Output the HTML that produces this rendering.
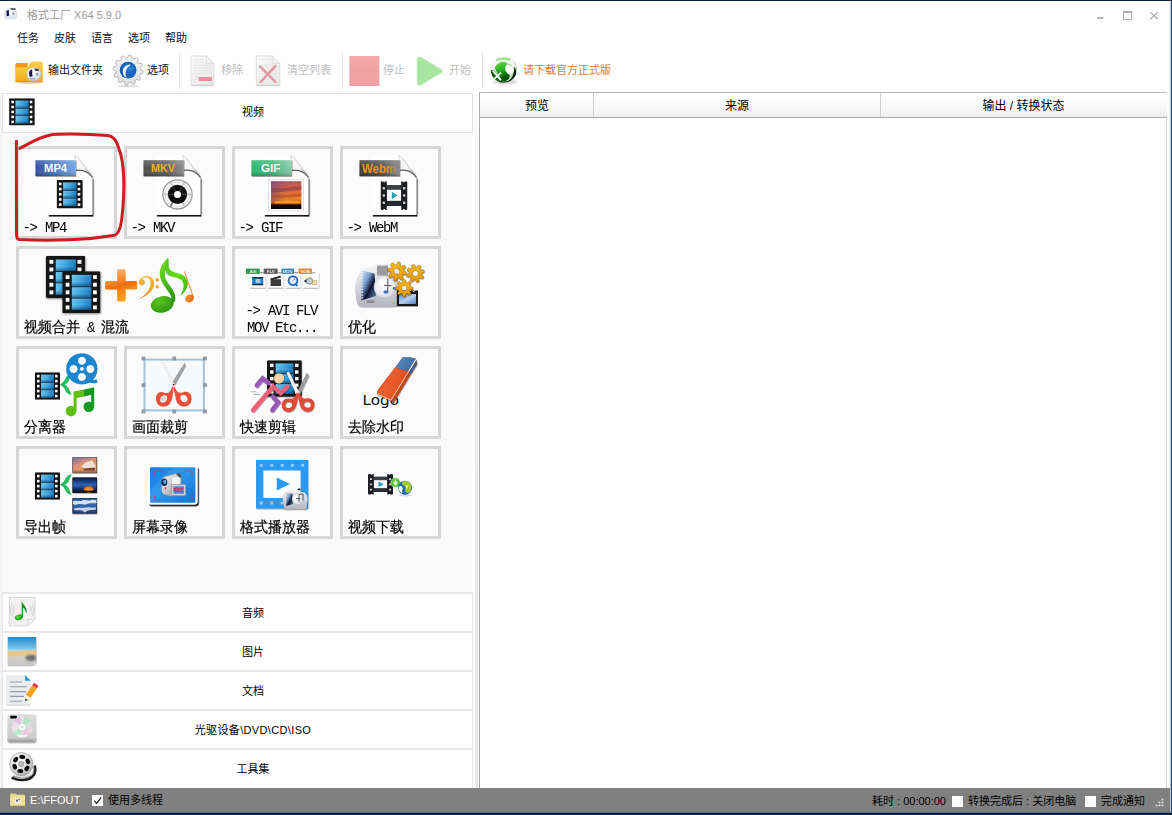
<!DOCTYPE html>
<html lang="zh-CN">
<head>
<meta charset="utf-8">
<title>格式工厂 X64 5.9.0</title>
<style>
html,body{margin:0;padding:0;}
body{width:1172px;height:815px;overflow:hidden;position:relative;background:#fff;
  font-family:"Liberation Sans","Noto Sans CJK SC",sans-serif;font-size:11px;color:#000;}
.abs,#win *{position:absolute;}
#win{position:absolute;left:0;top:0;width:1172px;height:815px;overflow:hidden;background:#fefefe;}
#win svg{overflow:visible;}
#win span.t{white-space:nowrap;line-height:16px;height:16px;}
/* borders */
#btop{left:0;top:0;width:1172px;height:1px;background:#0d2342;}
#bright{left:1170px;top:0;width:2px;height:815px;background:linear-gradient(90deg,#b4c8e0 0,#b4c8e0 40%,#1b467c 60%,#1b467c 100%);}
#bbot{left:0;top:812px;width:1172px;height:3px;background:linear-gradient(180deg,#566e8c 0,#566e8c 30%,#0c2244 40%,#0a1c3a 100%);}
/* title */
#title{left:27px;top:7px;color:#9b9b9b;font-size:11px;}
/* menu */
.menu{top:30px;font-size:11px;color:#111;}
/* toolbar */
.tb{top:61.5px;font-size:11px;color:#111;}
.tb.dis{color:#bdbdbd;}
.sep{top:52px;width:1px;height:37px;background:#e6e6e6;}
/* left panel */
#lp{left:0;top:92px;width:479px;height:696px;background:#fff;border-left:2px solid #f3f3f3;box-sizing:border-box;}
#strip{left:475px;top:93px;width:3px;height:695px;background:linear-gradient(180deg,#fafafa 0,#f2f2f2 25%,#e9e9e9 55%,#e8e8e8 100%);}
#lpbg{left:2px;top:93px;width:470px;height:695px;background:#fafafa;}
#vh{left:2px;top:93px;width:469px;height:38px;background:#fff;border:1px solid #e2e2e2;box-sizing:content-box;}
.tile{width:95px;height:87px;border:3px solid #d6d6d6;background:#fbfbfb;box-sizing:content-box;}
.tile.w{width:203px;}
.lbl{font-family:"Liberation Mono","WenQuanYi Zen Hei",monospace;font-size:14px;line-height:16px;white-space:nowrap;color:#000;-webkit-text-stroke:.2px #000;transform:scaleY(1.07);transform-origin:0 90%;}
.lat{letter-spacing:-1.4px;position:static !important;-webkit-text-stroke:0;}
.ar{position:static !important;margin-left:-1.5px;margin-right:1.5px;}
.acc{left:2px;width:469px;height:37px;background:#fff;border:1px solid #e6e6e6;border-top:2px solid #e8e8e8;border-bottom:none;}
.acct{width:200px;left:153px;text-align:center;font-size:11px;line-height:16px;color:#000;}
/* list */
#list{left:479px;top:92px;width:688px;height:696px;background:#fff;border-left:1px solid #a9a9a9;border-top:1px solid #b4b4b4;border-right:1px solid #dadada;box-sizing:border-box;}
#lh{left:480px;top:93px;width:687px;height:24px;background:linear-gradient(180deg,#ffffff 0,#fbfbfb 50%,#efefef 100%);border-bottom:1px solid #aaaaaa;}
.lht{top:98px;font-size:12px;line-height:16px;color:#000;text-align:center;}
.csep{top:93px;width:1px;height:24px;background:#d0d0d0;}
/* status */
#sb{left:0;top:788px;width:1172px;height:25px;background:#808080;}
.st{top:792px;font-size:11px;line-height:16px;white-space:nowrap;}
.cb{width:11px;height:11px;background:#fff;top:795px;}
</style>
</head>
<body>
<div id="win">
<!--TITLE-->
<span class="t" id="title">格式工厂 X64 5.9.0</span>
<!--WINCTL-->
<!--MENU-->
<span class="t menu" style="left:17px">任务</span>
<span class="t menu" style="left:54px">皮肤</span>
<span class="t menu" style="left:91px">语言</span>
<span class="t menu" style="left:128px">选项</span>
<span class="t menu" style="left:165px">帮助</span>
<!--TOOLBAR-->
<span class="t tb" style="left:48px">输出文件夹</span>
<span class="t tb" style="left:147px">选项</span>
<div class="sep" style="left:179px"></div>
<span class="t tb dis" style="left:221px">移除</span>
<span class="t tb dis" style="left:287px">清空列表</span>
<div class="sep" style="left:342px"></div>
<span class="t tb dis" style="left:383px">停止</span>
<span class="t tb dis" style="left:449px">开始</span>
<div class="sep" style="left:482px"></div>
<span class="t tb" style="left:523px;color:#e87a1e">请下载官方正式版</span>
<!--LEFT-->
<div id="lp"></div>
<div id="lpbg"></div><div id="strip"></div>
<div id="vh"></div>
<span class="t acct" style="top:104px">视频</span>
<!--TILES-->
<div class="tile" style="left:16px;top:146px"></div>
<div class="tile" style="left:124px;top:146px"></div>
<div class="tile" style="left:232px;top:146px"></div>
<div class="tile" style="left:340px;top:146px"></div>
<div class="tile w" style="left:16px;top:246px"></div>
<div class="tile" style="left:232px;top:246px"></div>
<div class="tile" style="left:340px;top:246px"></div>
<div class="tile" style="left:16px;top:346px"></div>
<div class="tile" style="left:124px;top:346px"></div>
<div class="tile" style="left:232px;top:346px"></div>
<div class="tile" style="left:340px;top:346px"></div>
<div class="tile" style="left:16px;top:446px"></div>
<div class="tile" style="left:124px;top:446px"></div>
<div class="tile" style="left:232px;top:446px"></div>
<div class="tile" style="left:340px;top:446px"></div>
<!--LABELS-->
<span class="lbl" style="left:24px;top:220px"><span class="lat"><span class="ar">-&gt;</span> MP4</span></span>
<span class="lbl" style="left:132px;top:220px"><span class="lat"><span class="ar">-&gt;</span> MKV</span></span>
<span class="lbl" style="left:240px;top:220px"><span class="lat"><span class="ar">-&gt;</span> GIF</span></span>
<span class="lbl" style="left:348px;top:220px"><span class="lat"><span class="ar">-&gt;</span> WebM</span></span>
<span class="lbl" style="left:24px;top:320px">视频合并<span class="lat"> &amp; </span>混流</span>
<span class="lbl" style="left:247px;top:303px"><span class="lat"><span class="ar">-&gt;</span> AVI FLV</span></span>
<span class="lbl" style="left:247px;top:320px"><span class="lat">MOV Etc...</span></span>
<span class="lbl" style="left:348px;top:320px">优化</span>
<span class="lbl" style="left:24px;top:420px">分离器</span>
<span class="lbl" style="left:132px;top:420px">画面裁剪</span>
<span class="lbl" style="left:240px;top:420px">快速剪辑</span>
<span class="lbl" style="left:348px;top:420px">去除水印</span>
<span class="lbl" style="left:24px;top:520px">导出帧</span>
<span class="lbl" style="left:132px;top:520px">屏幕录像</span>
<span class="lbl" style="left:240px;top:520px">格式播放器</span>
<span class="lbl" style="left:348px;top:520px">视频下载</span>
<!--ACCORDION-->
<div class="acc" style="top:592px"></div>
<div class="acc" style="top:631px"></div>
<div class="acc" style="top:670px"></div>
<div class="acc" style="top:709px"></div>
<div class="acc" style="top:748px;height:40px"></div>
<span class="t acct" style="top:605px">音频</span>
<span class="t acct" style="top:644px">图片</span>
<span class="t acct" style="top:683px">文档</span>
<span class="t acct" style="top:722px;letter-spacing:.35px">光驱设备\DVD\CD\ISO</span>
<span class="t acct" style="top:761px">工具集</span>
<!--LIST-->
<div id="list"></div>
<div id="lh"></div>
<div class="csep" style="left:593px"></div>
<div class="csep" style="left:880px"></div>
<span class="t lht" style="left:480px;width:114px">预览</span>
<span class="t lht" style="left:594px;width:286px">来源</span>
<span class="t lht" style="left:881px;width:285px">输出 / 转换状态</span>
<!--STATUS-->
<div id="sb"></div>
<span class="t st" style="left:30px;color:#fff">E:\FFOUT</span>
<div class="cb" style="left:92px"></div>
<span class="t st" style="left:108px">使用多线程</span>
<span class="t st" style="top:793px;left:872px">耗时 : 00:00:00</span>
<div class="cb" style="left:952px;top:796px"></div>
<span class="t st" style="top:793px;left:968px">转换完成后 : 关闭电脑</span>
<div class="cb" style="left:1085px;top:796px"></div>
<span class="t st" style="top:793px;left:1101px">完成通知</span>
<svg id="ic" width="1172" height="815" viewBox="0 0 1172 815" style="left:0;top:0">
<defs>
<linearGradient id="gfilm" x1="0" y1="0" x2="1" y2="0"><stop offset="0" stop-color="#6ac6ee"/><stop offset=".5" stop-color="#3fa6de"/><stop offset="1" stop-color="#1c7cc0"/></linearGradient>
<linearGradient id="gfilmv" x1="0" y1="0" x2="0" y2="1"><stop offset="0" stop-color="#fff" stop-opacity=".12"/><stop offset=".6" stop-color="#003060" stop-opacity="0"/><stop offset="1" stop-color="#002850" stop-opacity=".55"/></linearGradient>
<symbol id="film" viewBox="0 0 25 27" preserveAspectRatio="none">
<rect x="0" y="0" width="25" height="27" rx=".9" fill="#151515"/>
<g fill="#fff"><rect x="2.2" y="2.5" width="2.5" height="2.5"/><rect x="2.2" y="7.4" width="2.5" height="2.5"/><rect x="2.2" y="12.3" width="2.5" height="2.5"/><rect x="2.2" y="17.2" width="2.5" height="2.5"/><rect x="2.2" y="22.1" width="2.5" height="2.5"/>
<rect x="20.1" y="2.5" width="2.5" height="2.5"/><rect x="20.1" y="7.4" width="2.5" height="2.5"/><rect x="20.1" y="12.3" width="2.5" height="2.5"/><rect x="20.1" y="17.2" width="2.5" height="2.5"/><rect x="20.1" y="22.1" width="2.5" height="2.5"/></g>
<g fill="url(#gfilm)"><rect x="6.2" y="2.3" width="12.8" height="7.4"/><rect x="6.2" y="10.3" width="12.8" height="6.7"/><rect x="6.2" y="17.6" width="12.8" height="7.2"/></g>
<g fill="url(#gfilmv)"><rect x="6.2" y="2.3" width="12.8" height="7.4"/><rect x="6.2" y="10.3" width="12.8" height="6.7"/><rect x="6.2" y="17.6" width="12.8" height="7.2"/></g>
</symbol>
<filter id="psh" x="-10%" y="-10%" width="125%" height="125%"><feDropShadow dx="1.2" dy="1.7" stdDeviation=".65" flood-color="#000" flood-opacity="1"/></filter>
<filter id="ssh" x="-20%" y="-20%" width="150%" height="150%"><feDropShadow dx=".4" dy=".8" stdDeviation=".6" flood-color="#000" flood-opacity=".45"/></filter>
<filter id="b1"><feGaussianBlur stdDeviation=".5"/></filter>
<filter id="b2"><feGaussianBlur stdDeviation="1"/></filter>
<linearGradient id="gflap" x1="0" y1="0" x2="1" y2="1"><stop offset="0" stop-color="#fff"/><stop offset=".55" stop-color="#f4f4f4"/><stop offset="1" stop-color="#9a9a9a"/></linearGradient>
<symbol id="page" viewBox="0 0 48 62" overflow="visible">
<path d="M.2,.2H27C30,1 33,6 36,10C39,14 43.5,17 44.8,22.5V59.2H.2Z" fill="#fff" filter="url(#psh)"/>
<path d="M.2,.2H27C30,1 33,6 36,10C39,14 43.5,17 44.8,22.5V59.2H.2Z" fill="#fff"/>
<path d="M27,.2C28.6,5 29.2,10 28.4,14.6C34,14 40.5,15.5 44.6,21.5C42.5,16 38.5,13.5 36,10C33,6 30,1 27,.2Z" fill="url(#gflap)" stroke="#9a9a9a" stroke-width=".4"/>
<path d="M28.4,14.8C34,14.2 40.5,15.6 44.7,21.8" fill="none" stroke="#4a4a4a" stroke-width="1.2" opacity=".8"/>
</symbol>
<linearGradient id="gmp4" x1="0" y1="0" x2="1" y2="0"><stop offset="0" stop-color="#34519f"/><stop offset=".45" stop-color="#4b78c4"/><stop offset="1" stop-color="#72a9e6"/></linearGradient>
<linearGradient id="gmkv" x1="0" y1="0" x2="1" y2="0"><stop offset="0" stop-color="#4e4e4e"/><stop offset=".6" stop-color="#626262"/><stop offset="1" stop-color="#8e8e8e"/></linearGradient>
<linearGradient id="ggif" x1="0" y1="0" x2="1" y2="0"><stop offset="0" stop-color="#2cb86c"/><stop offset=".5" stop-color="#3dbb7a"/><stop offset="1" stop-color="#8ccab0"/></linearGradient>
<linearGradient id="gwebm" x1="0" y1="0" x2="1" y2="0"><stop offset="0" stop-color="#3c3c3c"/><stop offset=".6" stop-color="#5a5a5a"/><stop offset="1" stop-color="#8e8e8e"/></linearGradient>
<linearGradient id="glabsh" x1="0" y1="0" x2="0" y2="1"><stop offset="0" stop-color="#fff" stop-opacity=".18"/><stop offset=".5" stop-color="#fff" stop-opacity="0"/><stop offset="1" stop-color="#000" stop-opacity=".22"/></linearGradient>
<linearGradient id="gsun" x1="0" y1="0" x2="0" y2="1"><stop offset="0" stop-color="#b05a62"/><stop offset=".3" stop-color="#e0603c"/><stop offset=".62" stop-color="#f58a1e"/><stop offset=".78" stop-color="#d05a10"/><stop offset=".86" stop-color="#1a0c08"/><stop offset="1" stop-color="#0a0606"/></linearGradient>
<linearGradient id="gsunh" x1="0" y1="0" x2="1" y2="0"><stop offset="0" stop-color="#5a4a90" stop-opacity=".55"/><stop offset=".5" stop-color="#7a4a80" stop-opacity=".1"/><stop offset="1" stop-color="#ff5030" stop-opacity=".15"/></linearGradient>
<symbol id="wfilm" viewBox="0 0 27 29">
<path d="M0,1.2 L.8,0 H2.6 L3.2,1 H4.2 L4.8,0 H6.2V4H20.8V0H22.2L22.8,1H23.8L24.4,0H26.2L27,1.2V27.8L26.2,29H24.4L23.8,28H22.8L22.2,29H20.8V25H6.2V29H4.8L4.2,28H3.2L2.6,29H.8L0,27.8Z" fill="#1b1d20"/>
<rect x="6.2" y="4" width="14.6" height="4.4" fill="#3c4146"/>
<rect x="6.2" y="20.4" width="14.6" height="4.6" fill="#2a2d31"/>
<rect x="6.4" y="8.6" width="14.2" height="11.2" fill="#fafafa"/>
<path d="M11.3,10.6V18.2L17,14.4Z" fill="#1ea7b6"/>
<g fill="#c9c9c9"><rect x="2" y="5.8" width="2.5" height="2.6" rx=".5"/><rect x="2" y="13.1" width="2.5" height="2.6" rx=".5"/><rect x="2" y="20.4" width="2.5" height="2.6" rx=".5"/><rect x="22.5" y="5.8" width="2.5" height="2.6" rx=".5"/><rect x="22.5" y="13.1" width="2.5" height="2.6" rx=".5"/><rect x="22.5" y="20.4" width="2.5" height="2.6" rx=".5"/></g>
</symbol>
<linearGradient id="gwebmfade" x1="0" y1="0" x2="1" y2="0"><stop offset="0" stop-color="#777" stop-opacity="0"/><stop offset="1" stop-color="#8a8a8a" stop-opacity=".75"/></linearGradient>
<linearGradient id="gplus" x1="0" y1="0" x2=".35" y2="1"><stop offset="0" stop-color="#fbc090"/><stop offset=".45" stop-color="#f58a2c"/><stop offset=".6" stop-color="#f07414"/><stop offset="1" stop-color="#f9a21e"/></linearGradient>
<linearGradient id="gclef" x1="0" y1="0" x2="0" y2="1"><stop offset="0" stop-color="#f6b840"/><stop offset=".6" stop-color="#f2a024"/><stop offset="1" stop-color="#ee7a1a"/></linearGradient>
<linearGradient id="ggreen" x1="0" y1="0" x2=".4" y2="1"><stop offset="0" stop-color="#7ee02c"/><stop offset=".5" stop-color="#52c418"/><stop offset="1" stop-color="#2f9a12"/></linearGradient>
<radialGradient id="ggreenh" cx=".4" cy=".3" r=".8"><stop offset="0" stop-color="#5cc420"/><stop offset="1" stop-color="#2a9010"/></radialGradient>
<linearGradient id="gflagg" x1="0" y1="0" x2="1" y2="1"><stop offset="0" stop-color="#4cc018"/><stop offset=".5" stop-color="#66de14"/><stop offset="1" stop-color="#3fae14"/></linearGradient>
<radialGradient id="gonote" cx=".4" cy=".35" r=".8"><stop offset="0" stop-color="#f8902c"/><stop offset="1" stop-color="#ea6410"/></radialGradient>
<filter id="fsh" x="-15%" y="-15%" width="140%" height="140%"><feDropShadow dx=".3" dy=".8" stdDeviation=".9" flood-color="#000" flood-opacity=".55"/></filter>
<linearGradient id="gsilver" x1="0" y1="0" x2="0" y2="1"><stop offset="0" stop-color="#f4f4f6"/><stop offset=".5" stop-color="#d6d8dc"/><stop offset="1" stop-color="#b4b6bc"/></linearGradient>
<radialGradient id="gdisc" cx=".4" cy=".35" r=".75"><stop offset="0" stop-color="#ffffff"/><stop offset=".7" stop-color="#e6e6ea"/><stop offset="1" stop-color="#c4c4cc"/></radialGradient>
<linearGradient id="gbluefilm" x1="0" y1="0" x2="1" y2="1"><stop offset="0" stop-color="#dce8f6"/><stop offset=".35" stop-color="#7aa0d0"/><stop offset=".6" stop-color="#0c1430"/><stop offset="1" stop-color="#5a88c8"/></linearGradient>
<linearGradient id="ggear" x1="0" y1="0" x2="0" y2="1"><stop offset="0" stop-color="#f8b818"/><stop offset="1" stop-color="#e89808"/></linearGradient>
<linearGradient id="gscreen" x1="0" y1="0" x2="1" y2="1"><stop offset="0" stop-color="#5a90d8"/><stop offset=".5" stop-color="#b8d0f0"/><stop offset="1" stop-color="#4a80c8"/></linearGradient>
<linearGradient id="gbrace" x1="0" y1="0" x2="1" y2="0"><stop offset="0" stop-color="#12a050"/><stop offset=".5" stop-color="#2cc468"/><stop offset="1" stop-color="#18a858"/></linearGradient>
<symbol id="brace" viewBox="0 0 13 22" overflow="visible">
<path d="M0,10.4C3.2,9 4.6,6.4 5.8,3.8C7,1.400 9.2,.1 12.4,0C11,1.500 10.400,3.200 9.800,5.200C8.800,8.200 7,10 5,10.500C7,11.100 8.600,12.900 9.600,15.700C10.300,17.800 11,19.600 12.400,21.200C9,20.900 7,19.600 5.800,17.200C4.500,14.400 3.200,11.700 0,10.400Z" fill="url(#gbrace)"/>
</symbol>
<linearGradient id="gthumb1" x1="0" y1="0" x2=".6" y2="1"><stop offset="0" stop-color="#7c6c9c"/><stop offset=".45" stop-color="#d89078"/><stop offset="1" stop-color="#f6a050"/></linearGradient>
<linearGradient id="gthumb2" x1="0" y1="0" x2="0" y2="1"><stop offset="0" stop-color="#0c1a50"/><stop offset=".5" stop-color="#2c64b8"/><stop offset=".7" stop-color="#143878"/><stop offset="1" stop-color="#060c20"/></linearGradient>
<linearGradient id="gthumb3" x1="0" y1="0" x2="0" y2="1"><stop offset="0" stop-color="#2a5aa8"/><stop offset=".5" stop-color="#3466b0"/><stop offset="1" stop-color="#1c3c70"/></linearGradient>
<radialGradient id="gdome" cx=".5" cy=".6" r=".6"><stop offset="0" stop-color="#ffb030"/><stop offset="1" stop-color="#d05808"/></radialGradient>
<linearGradient id="gscr" x1="0" y1="0" x2="1" y2="1"><stop offset="0" stop-color="#1c7ae0"/><stop offset=".5" stop-color="#2a94ec"/><stop offset="1" stop-color="#1470d8"/></linearGradient>
<linearGradient id="gcam" x1="0" y1="0" x2="1" y2="1"><stop offset="0" stop-color="#f4f4f4"/><stop offset=".5" stop-color="#c8c8cc"/><stop offset="1" stop-color="#8c8c92"/></linearGradient>
<linearGradient id="geraser" x1="0" y1="0" x2="1" y2=".4"><stop offset="0" stop-color="#ee6a3c"/><stop offset=".6" stop-color="#e85a2c"/><stop offset="1" stop-color="#d84c20"/></linearGradient>
<linearGradient id="geraserb" x1="0" y1="0" x2="1" y2=".4"><stop offset="0" stop-color="#5a8cc0"/><stop offset="1" stop-color="#3c6ca4"/></linearGradient>
<linearGradient id="gfoldb" x1="0" y1="0" x2="0" y2="1"><stop offset="0" stop-color="#f4a01c"/><stop offset="1" stop-color="#e88410"/></linearGradient>
<linearGradient id="gfoldf" x1="0" y1="0" x2="0" y2="1"><stop offset="0" stop-color="#fbd04a"/><stop offset=".6" stop-color="#f6bc2c"/><stop offset="1" stop-color="#eeaa20"/></linearGradient>
<radialGradient id="glogo" cx=".45" cy=".4" r=".7"><stop offset="0" stop-color="#ffffff"/><stop offset=".6" stop-color="#e4e8f0"/><stop offset="1" stop-color="#b8c0d0"/></radialGradient>
<linearGradient id="ggearg" x1="0" y1="0" x2="0" y2="1"><stop offset="0" stop-color="#f6f6f6"/><stop offset="1" stop-color="#dedede"/></linearGradient>
<radialGradient id="gblue" cx=".55" cy=".45" r=".65"><stop offset="0" stop-color="#2a78d0"/><stop offset=".7" stop-color="#1460b8"/><stop offset="1" stop-color="#0c4a9c"/></radialGradient>
<linearGradient id="gdocp" x1="0" y1="0" x2="1" y2="1"><stop offset="0" stop-color="#fafafa"/><stop offset="1" stop-color="#e6e6e6"/></linearGradient>
<linearGradient id="gstop" x1="0" y1="0" x2="0" y2="1"><stop offset="0" stop-color="#f8a6a6"/><stop offset="1" stop-color="#ee9ea2"/></linearGradient>
<radialGradient id="gglobe" cx=".4" cy=".3" r=".8"><stop offset="0" stop-color="#ffffff"/><stop offset=".55" stop-color="#f2f6f2"/><stop offset=".85" stop-color="#a8c8a8"/><stop offset="1" stop-color="#2a6a2a"/></radialGradient>
<linearGradient id="ggl" x1="0" y1="0" x2=".3" y2="1"><stop offset="0" stop-color="#6ee04a"/><stop offset=".55" stop-color="#22a81e"/><stop offset="1" stop-color="#064c08"/></linearGradient>
<clipPath id="cglobe"><circle cx="503.800" cy="69.400" r="13.200"/></clipPath>
<linearGradient id="gsky" x1="0" y1="0" x2="0" y2="1"><stop offset="0" stop-color="#2488cc"/><stop offset=".42" stop-color="#7cc6e8"/><stop offset=".5" stop-color="#c8e4ec"/><stop offset=".52" stop-color="#e6c88e"/><stop offset=".64" stop-color="#e2d0a8"/><stop offset=".7" stop-color="#d2d0c8"/><stop offset="1" stop-color="#c6c6c2"/></linearGradient>
<linearGradient id="gdrv" x1="0" y1="0" x2="0" y2="1"><stop offset="0" stop-color="#dcdcdc"/><stop offset="1" stop-color="#c8c8c8"/></linearGradient>
<linearGradient id="gcd" x1="0" y1="0" x2="1" y2="1"><stop offset="0" stop-color="#e8c8e0"/><stop offset=".35" stop-color="#f0e4f0"/><stop offset=".5" stop-color="#c8ecd4"/><stop offset=".7" stop-color="#e8d0e4"/><stop offset="1" stop-color="#d8f0e0"/></linearGradient>
<radialGradient id="greel" cx=".4" cy=".35" r=".75"><stop offset="0" stop-color="#ffffff"/><stop offset=".6" stop-color="#dcdcdc"/><stop offset="1" stop-color="#9a9a9a"/></radialGradient>
<radialGradient id="gnote" cx=".4" cy=".4" r=".7"><stop offset="0" stop-color="#58e038"/><stop offset="1" stop-color="#0a8a10"/></radialGradient>
<symbol id="wfilmw" viewBox="0 0 27 29" preserveAspectRatio="none">
<path d="M0,1.2 L.8,0 H2.6 L3.2,1 H4.2 L4.8,0 H6.2V4H20.8V0H22.2L22.8,1H23.8L24.4,0H26.2L27,1.2V27.8L26.2,29H24.4L23.8,28H22.8L22.2,29H20.8V25H6.2V29H4.8L4.2,28H3.2L2.6,29H.8L0,27.8Z" fill="#1b1d20"/>
<rect x="6.2" y="4" width="14.6" height="4.4" fill="#3c4146"/>
<rect x="6.2" y="20.4" width="14.6" height="4.6" fill="#2a2d31"/>
<rect x="6.4" y="8.6" width="14.2" height="11.2" fill="#fafafa"/>
<path d="M11.3,10.6V18.2L17,14.4Z" fill="#1ea7b6"/>
<g fill="#c9c9c9"><rect x="2" y="5.8" width="2.5" height="2.6" rx=".5"/><rect x="2" y="13.1" width="2.5" height="2.6" rx=".5"/><rect x="2" y="20.4" width="2.5" height="2.6" rx=".5"/><rect x="22.5" y="5.8" width="2.5" height="2.6" rx=".5"/><rect x="22.5" y="13.1" width="2.5" height="2.6" rx=".5"/><rect x="22.5" y="20.4" width="2.5" height="2.6" rx=".5"/></g>
</symbol>
<filter id="b05"><feGaussianBlur stdDeviation=".35"/></filter>
</defs>

<!-- title icon -->
<g filter="url(#b1)">
<path d="M3.800,14.800C3.600,10.800 6,8.400 9.600,7.800L13.600,7.400C16,7.600 17,9.400 17,12V16.600C17,18.600 16,19.600 14,19.600H6.600C4.600,19.600 4,17.800 3.800,14.800Z" fill="#e0e4ec"/>
<path d="M6.400,11L8.600,10L9.400,15.400L6.800,16.200Z" fill="#101848"/>
<path d="M10.400,8L15.400,8.200L15.600,10L11,9.800Z" fill="#50545c"/>
<ellipse cx="10.800" cy="13.200" rx="1.800" ry="2.400" fill="#fcfdff"/>
<ellipse cx="13.200" cy="13.600" rx="1" ry=".9" fill="#70788a"/>
</g>
<!-- window controls -->
<rect x="1097" y="17.200" width="6.400" height="1.700" fill="#ababab"/>
<rect x="1123.500" y="12.200" width="8.200" height="7.400" fill="none" stroke="#ababab" stroke-width="1"/>
<rect x="1123" y="11" width="9.200" height="1.800" fill="#ababab"/>
<path d="M1150.400,12.400L1157.800,19M1157.800,12.400L1150.400,19" stroke="#a4a4a4" stroke-width="1.100" fill="none"/>

<!-- folder -->
<ellipse cx="29.500" cy="82.800" rx="13.500" ry="1" fill="#888" opacity=".35"/>
<path d="M15.400,64.600Q15.400,63 17,63H28.500L26,69H15.400Z" fill="url(#gfoldb)"/>
<path d="M15.300,68.600Q15.300,67.200 16.800,67.200H25.200C27.200,67.200 28,66.200 29,64.600C30.200,62.600 31.400,61.400 33.400,61.400H41.200Q42.800,61.400 42.800,63V80.800Q42.800,82.300 41.200,82.300H16.900Q15.300,82.300 15.300,80.800Z" fill="url(#gfoldf)"/>
<path d="M15.300,81.200H42.800" stroke="#d89a18" stroke-width=".9"/>
<g filter="url(#b05)">
<path d="M26.800,74.600C26.600,70.600 29.400,68.200 33.400,67.800C37.600,67.400 40.800,69.600 40.800,73.600C40.800,78 38.400,80.400 34,80.600C29.600,80.800 27,78.800 26.800,74.600Z" fill="url(#glogo)" stroke="#b9c2d4" stroke-width=".5"/>
<path d="M29.200,72.200C29.600,70.600 30.800,69.800 32,69.600L32.600,76.200L30,77C29.200,75.600 28.900,73.800 29.200,72.200Z" fill="#121a44"/>
<path d="M34.600,68.600L38.600,69L38.800,71.200L35,70.800Z" fill="#3a3e48"/>
<ellipse cx="34" cy="73.600" rx="1.500" ry="2.200" fill="#ffffff"/>
<path d="M36,73L38.400,73.200L38,76L36.200,75.600Z" fill="#8a96a8"/>
<path d="M29.600,77.600C31.600,78.400 33.600,78.400 35.400,77.800L34.600,79.600H30.600Z" fill="#7a98d0" opacity=".8"/>
</g>
<!-- gear -->
<ellipse cx="128" cy="86.200" rx="11" ry="1" fill="#888" opacity=".3"/>
<path d="M141.83,70.20L142.79,70.68L143.08,71.18L143.11,71.68L143.07,72.17L142.98,72.66L142.82,73.13L142.39,73.53L141.30,73.74L140.25,73.89L139.83,74.18L139.62,74.54L139.46,74.91L139.32,75.28L139.21,75.68L139.33,76.20L139.99,77.07L140.58,77.96L140.59,78.54L140.36,78.99L140.08,79.39L139.76,79.77L139.38,80.10L138.81,80.23L137.76,79.86L136.78,79.47L136.27,79.51L135.91,79.72L135.59,79.96L135.27,80.21L134.98,80.50L134.82,81.01L134.97,82.09L135.03,83.17L134.74,83.67L134.33,83.94L133.88,84.15L133.41,84.32L132.92,84.41L132.36,84.24L131.64,83.40L130.98,82.57L130.52,82.35L130.11,82.35L129.71,82.39L129.31,82.46L128.91,82.57L128.52,82.92L128.10,83.93L127.62,84.89L127.12,85.18L126.62,85.21L126.13,85.17L125.64,85.08L125.17,84.92L124.77,84.49L124.56,83.40L124.41,82.35L124.12,81.93L123.76,81.72L123.39,81.56L123.02,81.42L122.62,81.31L122.10,81.43L121.23,82.09L120.34,82.68L119.76,82.69L119.31,82.46L118.91,82.18L118.53,81.86L118.20,81.48L118.07,80.91L118.44,79.86L118.83,78.88L118.79,78.37L118.58,78.01L118.34,77.69L118.09,77.37L117.80,77.08L117.29,76.92L116.21,77.07L115.13,77.13L114.63,76.84L114.36,76.43L114.15,75.98L113.98,75.51L113.89,75.02L114.06,74.46L114.90,73.74L115.73,73.08L115.95,72.62L115.95,72.21L115.91,71.81L115.84,71.41L115.73,71.01L115.38,70.62L114.37,70.20L113.41,69.72L113.12,69.22L113.09,68.72L113.13,68.23L113.22,67.74L113.38,67.27L113.81,66.87L114.90,66.66L115.95,66.51L116.37,66.22L116.58,65.86L116.74,65.49L116.88,65.12L116.99,64.72L116.87,64.20L116.21,63.33L115.62,62.44L115.61,61.86L115.84,61.41L116.12,61.01L116.44,60.63L116.82,60.30L117.39,60.17L118.44,60.54L119.42,60.93L119.93,60.89L120.29,60.68L120.61,60.44L120.93,60.19L121.22,59.90L121.38,59.39L121.23,58.31L121.17,57.23L121.46,56.73L121.87,56.46L122.32,56.25L122.79,56.08L123.28,55.99L123.84,56.16L124.56,57.00L125.22,57.83L125.68,58.05L126.09,58.05L126.49,58.01L126.89,57.94L127.29,57.83L127.68,57.48L128.10,56.47L128.58,55.51L129.08,55.22L129.58,55.19L130.07,55.23L130.56,55.32L131.03,55.48L131.43,55.91L131.64,57.00L131.79,58.05L132.08,58.47L132.44,58.68L132.81,58.84L133.18,58.98L133.58,59.09L134.10,58.97L134.97,58.31L135.86,57.72L136.44,57.71L136.89,57.94L137.29,58.22L137.67,58.54L138.00,58.92L138.13,59.49L137.76,60.54L137.37,61.52L137.41,62.03L137.62,62.39L137.86,62.71L138.11,63.03L138.40,63.32L138.91,63.48L139.99,63.33L141.07,63.27L141.57,63.56L141.84,63.97L142.05,64.42L142.22,64.89L142.31,65.38L142.14,65.94L141.30,66.66L140.47,67.32L140.25,67.78L140.25,68.19L140.29,68.59L140.36,68.99L140.47,69.39L140.82,69.78Z" fill="url(#ggearg)" stroke="#a9a9a9" stroke-width=".9" stroke-linejoin="round"/>
<circle cx="128.100" cy="70.200" r="9.600" fill="#f4f6fa" stroke="#d8dce4" stroke-width=".6"/>
<circle cx="128.100" cy="70.200" r="8.400" fill="url(#gblue)"/>
<path d="M129.800,64.600C125.600,65 122.800,67.800 122.800,71.600C122.800,74.600 124.400,77 127,78C125.200,75.600 125,72.600 126.200,70C127,68 128.600,66.600 130.400,65.600Z" fill="#f4f8ff"/>
<path d="M128.800,68.200C131,67 133.600,67.400 135.200,69C133,68.600 130.800,69.400 129.200,71.400Z" fill="#3a88dc" opacity=".8"/>
<!-- doc remove -->
<g opacity=".92">
<path d="M191,56H206.400L213.800,63.400V85.200H191Z" fill="url(#gdocp)" stroke="#d0d0d0" stroke-width=".7"/>
<path d="M206.400,56V63.400H213.800Z" fill="#f2f2f2" stroke="#cfcfcf" stroke-width=".6"/>
<path d="M193.400,59.600H204M193.400,62.400H204M193.400,65.200H211.400M193.400,68H211.400M193.400,70.800H211.400M193.400,73.600H211.400M193.400,76.400H198M193.400,79.200H198M193.400,82H198" stroke="#e0e0e0" stroke-width=".8"/>
<path d="M191.200,85.600H213.800" stroke="#c4c4c4" stroke-width=".9"/>
<rect x="198.600" y="77" width="13.400" height="4" fill="#e28a92"/>
</g>
<!-- doc clear -->
<g opacity=".92">
<path d="M256.400,56H272.400L279.800,63.400V85.200H256.400Z" fill="url(#gdocp)" stroke="#d0d0d0" stroke-width=".7"/>
<path d="M272.400,56V63.400H279.800Z" fill="#f2f2f2" stroke="#cfcfcf" stroke-width=".6"/>
<path d="M259,59.200H270M261,65.200H277.400M261,68H277.400M261,70.800H277.400M261,73.600H277.400M261,76.400H277.400M261,79.200H277.400M261,82H270" stroke="#e0e0e0" stroke-width=".8"/>
<path d="M259.200,65.200V83" stroke="#c8ccd0" stroke-width=".9" stroke-dasharray=".9 1.900"/>
<path d="M256.600,85.600H279.800" stroke="#c4c4c4" stroke-width=".9"/>
<path d="M260.200,66.600L275.400,81.800M275.200,66.400L260.600,82" stroke="#e0909a" stroke-width="2.500" stroke-linecap="round"/>
</g>
<!-- stop -->
<rect x="349.400" y="56" width="30" height="30" fill="url(#gstop)"/>
<!-- play -->
<path d="M418.400,57.200Q417.200,57.600 417.200,59V83Q417.200,85 419,85.400Q420,85.600 421.400,84.800L441.800,72.600Q443.600,71.200 441.800,69.800L421.400,57.400Q419.800,56.600 418.400,57.200Z" fill="#a6e6a0" stroke="#c4f0c0" stroke-width=".8"/>
<!-- globe -->
<ellipse cx="505" cy="81.600" rx="12" ry="2.600" fill="#000" opacity=".16" filter="url(#b2)"/>
<circle cx="503.850" cy="69.300" r="13.100" fill="url(#gglobe)"/>
<g clip-path="url(#cglobe)">
<path d="M495.900,59.600C499,56.800 506,56.400 510.800,58.400L509.600,60.800C505,59.600 500,59.800 496.600,61.200Z" fill="#7ed46c" opacity=".7" filter="url(#b1)"/>
<path d="M490.500,70.500C491,75 493,79.500 497,82.500L503,83.500L500,77L494,70Z" fill="#0a5c0e"/>
<path d="M496.900,64.900L501,62.100L505.600,62.400L506.700,63.400L504.600,67L505.100,71.600L508.200,72.700L509.300,75.800L508.200,78.900L504.600,80.900L499.500,80.400L500.500,76.800L496.900,71.600L495.100,68Z" fill="url(#ggl)" stroke="url(#ggl)" stroke-width="1" stroke-linejoin="round"/>
<path d="M499,80.500C503,82.800 509,81.600 512.500,78.200L514,76C512,80.500 507,84 501,83Z" fill="#042a06"/>
<path d="M514.400,66.600C516.600,70 516.800,74.400 514.800,77.600C513,80.200 510,82 507.200,82.600C511.600,79.800 514.400,74 514.400,66.600Z" fill="#0a2a0c"/>
<path d="M505.600,63.400L511.800,65.400" stroke="#58c848" stroke-width=".8" opacity=".8"/>
<path d="M492.800,70.600L501,80.400" stroke="#fff" stroke-width="2" opacity=".95"/>
<path d="M494.300,78.900L501,72.700" stroke="#fff" stroke-width="1.800" opacity=".95"/>
<ellipse cx="509.600" cy="70.600" rx="3.200" ry="3.600" fill="#fff" opacity=".95" filter="url(#b1)"/>
</g>

<use href="#film" x="9.100" y="98.200" width="25.700" height="27.400"/>

<!-- MP4 -->
<use href="#page" x="47.5" y="155.5" width="48" height="62"/>
<g filter="url(#ssh)"><rect x="35.5" y="160.2" width="40.3" height="15.8" fill="url(#gmp4)"/></g>
<rect x="35.5" y="160.2" width="40.3" height="15.8" fill="url(#glabsh)"/>
<text x="55.6" y="172.3" text-anchor="middle" font-family="Liberation Sans, sans-serif" font-weight="bold" font-size="11.2" fill="#fff">MP4</text>
<use href="#film" x="56.6" y="180" width="26.2" height="28.4"/>
<!-- MKV -->
<use href="#page" x="155.5" y="155.5" width="48" height="62"/>
<g filter="url(#ssh)"><rect x="143.5" y="160.2" width="40.3" height="15.8" fill="url(#gmkv)"/></g>
<rect x="143.5" y="160.2" width="40.3" height="15.8" fill="url(#glabsh)"/>
<text x="163" y="172.2" text-anchor="middle" font-family="Liberation Sans, sans-serif" font-weight="bold" font-size="10.8" fill="#f2b21c">MKV</text>
<g transform="translate(177.5,194.4)">
<circle r="14.6" fill="#fbfbfb" stroke="#9c9c9c" stroke-width="1.3"/>
<circle r="12.4" fill="none" stroke="#dedede" stroke-width="1"/>
<g stroke="#c4c4c4" stroke-width="1.6"><path d="M0,0L14.2,0M0,0L-14.2,0M0,0L7.1,12.3M0,0L-7.1,12.3M0,0L7.1,-12.3M0,0L-7.1,-12.3"/></g>
<path d="M-7.1,12.3L-3,5" stroke="#777" stroke-width="1.6"/>
<circle r="9.6" fill="#0c0c0c"/>
<g stroke="#4a4a4a" stroke-width="1.2" opacity=".8"><path d="M0,0L-5,-8M0,0L5,-8M0,0L9,0M0,0L-9,0"/></g>
<circle r="3.5" fill="#fff"/>
</g>
<!-- GIF -->
<use href="#page" x="263.5" y="155.5" width="48" height="62"/>
<g filter="url(#ssh)"><rect x="251.5" y="160.2" width="40.3" height="15.8" fill="url(#ggif)"/></g>
<rect x="251.5" y="160.2" width="40.3" height="15.8" fill="url(#glabsh)"/>
<text x="270.6" y="172.4" text-anchor="middle" font-family="Liberation Sans, sans-serif" font-weight="bold" font-size="11.6" fill="#fff">GIF</text>
<rect x="268.7" y="179.2" width="34.6" height="31.8" fill="#fff" stroke="#d8c8c0" stroke-width=".6"/>
<rect x="271" y="181.2" width="30.4" height="27.8" fill="url(#gsun)"/>
<rect x="271" y="181.2" width="30.4" height="20" fill="url(#gsunh)"/>
<g filter="url(#b1)">
<path d="M271,188.500C277,186.500 284,189.500 291,187.200C295,186 299,187 301.400,186V189.500C296,191 291,190 286,191.500C281,193 275,191 271,192.500Z" fill="#7a3a50" opacity=".55"/>
<path d="M271,195C278,193 286,196 293,194.300C296,193.600 299,194.400 301.400,193.800V196.500C295,198 288,197 282,198C278,198.600 274,197.600 271,198Z" fill="#b04a30" opacity=".6"/>
<path d="M275,201.500C282,200.200 292,200.400 300,201.500V203.500H275Z" fill="#ffa428" opacity=".8"/>
</g>
<!-- WebM -->
<use href="#page" x="371.5" y="155.5" width="48" height="62"/>
<g filter="url(#ssh)"><rect x="359.5" y="160.2" width="40.3" height="15.8" fill="url(#gwebm)"/></g>
<rect x="359.5" y="160.2" width="40.3" height="15.8" fill="url(#glabsh)"/>
<text x="362" y="172.6" font-family="Liberation Sans, sans-serif" font-weight="bold" font-size="12" fill="#f0921e" textLength="34" lengthAdjust="spacingAndGlyphs">Webm</text>
<rect x="385" y="161" width="15" height="14" fill="url(#gwebmfade)"/>
<use href="#wfilm" x="380.4" y="181.2" width="27.2" height="28.8"/>

<!-- merge -->
<use href="#film" x="46" y="256" width="39.2" height="42" filter="url(#fsh)"/>
<use href="#film" x="62.3" y="271.3" width="38.2" height="41.8" filter="url(#fsh)"/>
<path d="M118.6,269.2H124.2Q125.7,269.2 125.7,270.7V281H135.7Q137.2,281 137.2,282.5V288Q137.2,289.5 135.7,289.5H125.7V300Q125.7,301.5 124.2,301.5H118.6Q117.1,301.5 117.1,300V289.5H106.6Q105.1,289.5 105.1,288V282.5Q105.1,281 106.6,281H117.1V270.7Q117.1,269.2 118.6,269.2Z" fill="url(#gplus)"/>
<path d="M105.5,285.5C112,286.5 117,284.5 125.7,281.2H135.7Q137.2,281.2 137.2,282.5V284C130,284 124,287.5 117.2,289.5H106.6Q105.1,289.5 105.1,288Z" fill="#ee6c10" opacity=".45"/>
<g fill="url(#gclef)">
<path d="M141.8,279.2A3.1,3.1 0 1 1 141.7,285.4A3.1,3.1 0 0 1 139.2,280.6C140.5,277.4 143.5,275.8 146.6,275.9C151.2,276 154.4,279.4 154.2,284C153.9,291 146,296.5 138.2,299.6C144.5,295.6 150.3,290.5 150.5,284C150.6,280.2 149,277.6 146.2,277.5C144,277.4 142.4,278 141.8,279.2Z"/>
<circle cx="157.2" cy="279.8" r="1.7"/><circle cx="157.2" cy="286.7" r="1.7"/>
</g>
<ellipse cx="162.3" cy="304.4" rx="11.6" ry="8.2" transform="rotate(-12 162.3 304.4)" fill="url(#ggreenh)"/>
<path d="M167.6,258C163,262.5 159.5,268 159.7,274C160,281 165,287 169,292.5C171,295.5 172.2,299 171.8,303L175,301.5C176,298 175.2,293.5 172.5,289.5C169,284 164.5,279.5 164.8,274.5C165,271 166.5,268 168.3,266.5L168.8,259.5Z" fill="url(#ggreen)"/>
<path d="M168,258.3C168.6,263 168,267 170,269.5C173,273 179,272.5 183.5,275.5C187,278 188.6,282 187.6,286C186.6,290 183.5,293.5 180.2,296C183,291 184.5,286.5 183,282.5C181,277.5 174,277.8 169.5,275.8C166,274.2 165,270 165.5,266Z" fill="url(#gflagg)"/>
<path d="M184.5,271.6L193.2,296.6" stroke="#f0983a" stroke-width="1.1" fill="none"/>
<ellipse cx="189.6" cy="298.4" rx="4.6" ry="3.7" transform="rotate(-32 189.6 298.4)" fill="url(#gonote)"/>
<!-- AVI FLV MOV VOB -->
<g filter="url(#ssh)" fill="#fdfdfd"><rect x="250" y="272" width="15.4" height="15.6"/><rect x="267.7" y="272" width="15.4" height="15.6"/><rect x="285.3" y="272" width="15" height="15.6"/><rect x="302.6" y="272" width="16" height="15.6"/></g>
<g><rect x="246" y="268.6" width="13.8" height="5.3" fill="#2e9a58"/><rect x="263.7" y="268.6" width="14" height="5.3" fill="#5c5c5c"/><rect x="281.3" y="268.6" width="12.8" height="5.3" fill="#3a86b8"/><rect x="298.5" y="268.6" width="13.4" height="5.3" fill="#e08838"/>
<rect x="259.8" y="272.2" width="3.9" height="1" fill="#7a8a80"/><rect x="277.7" y="272.2" width="3.6" height="1" fill="#808890"/><rect x="294.1" y="272.2" width="4.4" height="1" fill="#8a8a88"/><rect x="311.9" y="272.2" width="3.5" height="1" fill="#999"/></g>
<g font-family="Liberation Sans, sans-serif" font-weight="bold" font-size="4.4" fill="#fff" text-anchor="middle" opacity=".85"><text x="252.9" y="272.9">AVI</text><text x="270.7" y="272.9">FLV</text><text x="287.7" y="272.9">MOV</text><text x="305.2" y="272.9">VOB</text></g>
<rect x="252.2" y="277" width="11" height="8.2" fill="#1e78c8"/><rect x="252.2" y="277" width="11" height="1.3" fill="#22303c"/><rect x="252.2" y="283.9" width="11" height="1.3" fill="#22303c"/><rect x="255.5" y="279" width="5" height="4.2" fill="#9cd0f4"/>
<path d="M270.6,279.2H281V286H270.6Z" fill="#3c3c3e"/><path d="M270.4,278.6L280.6,275.6L281,277.4L270.8,280.4Z" fill="#2a2a2c"/><path d="M273,277.2L274.6,276.8M276,276.4L277.6,276" stroke="#ddd" stroke-width=".9"/>
<circle cx="293" cy="280.6" r="4.4" fill="#e8f0fa" stroke="#2a6cc0" stroke-width="1.9"/><path d="M293,280.6L295,278.4" stroke="#2a6cc0" stroke-width="1"/><path d="M295.2,283.6L297.6,286.2" stroke="#2a6cc0" stroke-width="1.8"/>
<path d="M303.8,281L307,278.6V283.4Z" fill="#333"/><circle cx="309.6" cy="281" r="3.2" fill="#c8ccd4" stroke="#70788a" stroke-width=".8"/><rect x="312.6" y="280.6" width="3.8" height="4.2" fill="#f0d8a0" stroke="#b89858" stroke-width=".5"/>
<!-- optimise -->
<path d="M356,296C354,284 357,272 366,268L374,266V264.6H386V270L397,274V304C397,305.5 396,306.4 394.6,306.4H361C358,306.4 356.6,303 356,296Z" fill="url(#gsilver)" filter="url(#ssh)"/>
<rect x="377" y="265.6" width="11" height="10" fill="#9a9ca2"/>
<path d="M361.5,270.5L374.5,273.5L376,296L361.2,300.5Z" fill="url(#gbluefilm)"/>
<path d="M362.2,272V299" stroke="#eef2f8" stroke-width="1.4" stroke-dasharray="1.3 1.5"/>
<circle cx="385" cy="287" r="11" fill="url(#gdisc)" stroke="#b8b8c0" stroke-width=".5"/>
<ellipse cx="386" cy="292" rx="2.6" ry="1.7" fill="#4a78c0"/><ellipse cx="394.5" cy="288.4" rx="1.8" ry="1.4" fill="#4a78c0"/>
<path d="M387.8,291.6V278.5M384,285.4L391.4,285.6" stroke="#555a62" stroke-width="1" fill="none"/>
<rect x="366.5" y="300.2" width="8" height="2.8" fill="#8a8c92"/>
<circle cx="393.8" cy="303" r=".9" fill="#8cc078"/>
<rect x="396.8" y="290.4" width="21.2" height="16" fill="#16181c"/>
<rect x="399" y="294" width="17" height="10" fill="url(#gscreen)"/>
<path d="M399.5,291.8L402,290.2M404,291.8L406.5,290.2M408.5,291.8L411,290.2M413,291.8L415.5,290.2" stroke="#e8e8e8" stroke-width="1"/>
<g fill="url(#ggear)" stroke="#8a5a00" stroke-width=".5" fill-rule="evenodd" filter="url(#ssh)"><path d="M404.99,271.40L406.09,271.80L406.45,272.23L406.50,272.65L406.45,273.07L406.37,273.48L406.26,273.88L406.07,274.26L405.65,274.55L404.59,274.54L403.44,274.40L402.95,274.50L402.73,274.71L402.57,274.95L402.41,275.19L402.25,275.43L402.12,275.70L402.16,276.13L402.65,277.05L403.15,278.11L403.10,278.67L402.83,279.00L402.51,279.26L402.16,279.50L401.79,279.70L401.39,279.84L400.89,279.74L400.14,278.99L399.43,278.07L399.02,277.80L398.71,277.80L398.43,277.85L398.15,277.90L397.86,277.96L397.58,278.06L397.31,278.39L397.00,279.39L396.60,280.49L396.17,280.85L395.75,280.90L395.33,280.85L394.92,280.77L394.52,280.66L394.14,280.47L393.85,280.05L393.86,278.99L394.00,277.84L393.90,277.35L393.69,277.13L393.45,276.97L393.21,276.81L392.97,276.65L392.70,276.52L392.27,276.56L391.35,277.05L390.29,277.55L389.73,277.50L389.40,277.23L389.14,276.91L388.90,276.56L388.70,276.19L388.56,275.79L388.66,275.29L389.41,274.54L390.33,273.83L390.60,273.42L390.60,273.11L390.55,272.83L390.50,272.55L390.44,272.26L390.34,271.98L390.01,271.71L389.01,271.40L387.91,271.00L387.55,270.57L387.50,270.15L387.55,269.73L387.63,269.32L387.74,268.92L387.93,268.54L388.35,268.25L389.41,268.26L390.56,268.40L391.05,268.30L391.27,268.09L391.43,267.85L391.59,267.61L391.75,267.37L391.88,267.10L391.84,266.67L391.35,265.75L390.85,264.69L390.90,264.13L391.17,263.80L391.49,263.54L391.84,263.30L392.21,263.10L392.61,262.96L393.11,263.06L393.86,263.81L394.57,264.73L394.98,265.00L395.29,265.00L395.57,264.95L395.85,264.90L396.14,264.84L396.42,264.74L396.69,264.41L397.00,263.41L397.40,262.31L397.83,261.95L398.25,261.90L398.67,261.95L399.08,262.03L399.48,262.14L399.86,262.33L400.15,262.75L400.14,263.81L400.00,264.96L400.10,265.45L400.31,265.67L400.55,265.83L400.79,265.99L401.03,266.15L401.30,266.28L401.73,266.24L402.65,265.75L403.71,265.25L404.27,265.30L404.60,265.57L404.86,265.89L405.10,266.24L405.30,266.61L405.44,267.01L405.34,267.51L404.59,268.26L403.67,268.97L403.40,269.38L403.40,269.69L403.45,269.97L403.50,270.25L403.56,270.54L403.66,270.82L403.99,271.09ZM399.90,271.40A2.9,2.9 0 1 0 394.10,271.40A2.9,2.9 0 1 0 399.90,271.40Z"/><path d="M421.69,273.40L421.61,273.67L421.58,273.94L421.55,274.21L421.52,274.48L421.55,274.76L421.81,275.12L422.70,275.70L423.49,276.34L423.64,276.81L423.54,277.20L423.38,277.56L423.19,277.90L422.97,278.23L422.69,278.51L422.19,278.61L421.18,278.25L420.26,277.85L419.84,277.84L419.60,277.98L419.39,278.15L419.18,278.32L418.97,278.49L418.78,278.71L418.72,279.15L418.93,280.19L419.04,281.20L418.81,281.64L418.47,281.84L418.11,281.98L417.73,282.09L417.34,282.17L416.95,282.17L416.52,281.89L416.06,280.92L415.69,279.99L415.40,279.69L415.13,279.61L414.86,279.58L414.59,279.55L414.32,279.52L414.04,279.55L413.68,279.81L413.10,280.70L412.46,281.49L411.99,281.64L411.60,281.54L411.24,281.38L410.90,281.19L410.57,280.97L410.29,280.69L410.19,280.19L410.55,279.18L410.95,278.26L410.96,277.84L410.82,277.60L410.65,277.39L410.48,277.18L410.31,276.97L410.09,276.78L409.65,276.72L408.61,276.93L407.60,277.04L407.16,276.81L406.96,276.47L406.82,276.11L406.71,275.73L406.63,275.34L406.63,274.95L406.91,274.52L407.88,274.06L408.81,273.69L409.11,273.40L409.19,273.13L409.22,272.86L409.25,272.59L409.28,272.32L409.25,272.04L408.99,271.68L408.10,271.10L407.31,270.46L407.16,269.99L407.26,269.60L407.42,269.24L407.61,268.90L407.83,268.57L408.11,268.29L408.61,268.19L409.62,268.55L410.54,268.95L410.96,268.96L411.20,268.82L411.41,268.65L411.62,268.48L411.83,268.31L412.02,268.09L412.08,267.65L411.87,266.61L411.76,265.60L411.99,265.16L412.33,264.96L412.69,264.82L413.07,264.71L413.46,264.63L413.85,264.63L414.28,264.91L414.74,265.88L415.11,266.81L415.40,267.11L415.67,267.19L415.94,267.22L416.21,267.25L416.48,267.28L416.76,267.25L417.12,266.99L417.70,266.10L418.34,265.31L418.81,265.16L419.20,265.26L419.56,265.42L419.90,265.61L420.23,265.83L420.51,266.11L420.61,266.61L420.25,267.62L419.85,268.54L419.84,268.96L419.98,269.20L420.15,269.41L420.32,269.62L420.49,269.83L420.71,270.02L421.15,270.08L422.19,269.87L423.20,269.76L423.64,269.99L423.84,270.33L423.98,270.69L424.09,271.07L424.17,271.46L424.17,271.85L423.89,272.28L422.92,272.74L421.99,273.11ZM418.10,273.40A2.7,2.7 0 1 0 412.70,273.40A2.7,2.7 0 1 0 418.10,273.40Z"/><path d="M412.80,288.20L412.79,288.57L412.73,288.95L412.54,289.30L411.89,289.56L410.73,289.65L410.08,289.78L409.86,289.99L409.75,290.22L409.65,290.46L409.55,290.70L409.47,290.94L409.47,291.24L409.84,291.79L410.60,292.68L410.87,293.32L410.76,293.70L410.54,294.01L410.28,294.28L410.01,294.54L409.70,294.76L409.32,294.87L408.68,294.60L407.79,293.84L407.24,293.47L406.94,293.47L406.70,293.55L406.46,293.65L406.22,293.75L405.99,293.86L405.78,294.08L405.65,294.73L405.56,295.89L405.30,296.54L404.95,296.73L404.57,296.79L404.20,296.80L403.83,296.79L403.45,296.73L403.10,296.54L402.84,295.89L402.75,294.73L402.62,294.08L402.41,293.86L402.18,293.75L401.94,293.65L401.70,293.55L401.46,293.47L401.16,293.47L400.61,293.84L399.72,294.60L399.08,294.87L398.70,294.76L398.39,294.54L398.12,294.28L397.86,294.01L397.64,293.70L397.53,293.32L397.80,292.68L398.56,291.79L398.93,291.24L398.93,290.94L398.85,290.70L398.75,290.46L398.65,290.22L398.54,289.99L398.32,289.78L397.67,289.65L396.51,289.56L395.86,289.30L395.67,288.95L395.61,288.57L395.60,288.20L395.61,287.83L395.67,287.45L395.86,287.10L396.51,286.84L397.67,286.75L398.32,286.62L398.54,286.41L398.65,286.18L398.75,285.94L398.85,285.70L398.93,285.46L398.93,285.16L398.56,284.61L397.80,283.72L397.53,283.08L397.64,282.70L397.86,282.39L398.12,282.12L398.39,281.86L398.70,281.64L399.08,281.53L399.72,281.80L400.61,282.56L401.16,282.93L401.46,282.93L401.70,282.85L401.94,282.75L402.18,282.65L402.41,282.54L402.62,282.32L402.75,281.67L402.84,280.51L403.10,279.86L403.45,279.67L403.83,279.61L404.20,279.60L404.57,279.61L404.95,279.67L405.30,279.86L405.56,280.51L405.65,281.67L405.78,282.32L405.99,282.54L406.22,282.65L406.46,282.75L406.70,282.85L406.94,282.93L407.24,282.93L407.79,282.56L408.68,281.80L409.32,281.53L409.70,281.64L410.01,281.86L410.28,282.12L410.54,282.39L410.76,282.70L410.87,283.08L410.60,283.72L409.84,284.61L409.47,285.16L409.47,285.46L409.55,285.70L409.65,285.94L409.75,286.18L409.86,286.41L410.08,286.62L410.73,286.75L411.89,286.84L412.54,287.10L412.73,287.45L412.79,287.83ZM406.80,288.20A2.6,2.6 0 1 0 401.60,288.20A2.6,2.6 0 1 0 406.80,288.20Z"/></g>
<circle cx="396.4" cy="271" r="2.4" fill="#dfe6ee" opacity=".9"/><circle cx="415.4" cy="273.4" r="2.4" fill="#fafafa"/><circle cx="404.2" cy="288" r="2.3" fill="#e8eef6"/>

<!-- separator -->
<use href="#film" x="34.8" y="372.3" width="25.2" height="27.5"/>
<use href="#brace" x="60" y="374.4" width="12.4" height="21.4"/>
<path d="M86,381.5C90,383.4 94,383.8 97.6,382.4L96.6,379.2C94,380.4 91.6,380 89.4,379Z" fill="#1a86d0"/>
<path fill-rule="evenodd" fill="#1a86d0" d="M81.9,353.2A15.7,15.7 0 1 1 81.8,353.2ZM81.9,356.8a4,4 0 1 0 .1,0ZM81.9,373a4,4 0 1 0 .1,0ZM73.5,364.9a4,4 0 1 0 .1,0ZM90.3,364.9a4,4 0 1 0 .1,0ZM81.9,367a1.9,1.9 0 1 0 .1,0Z"/>
<circle cx="71" cy="411" r="5.3" fill="#5fc212"/>
<path d="M73.6,391.6L84,389.4V396.4L76.6,398V411H73.6Z" fill="#5fc212"/>
<path d="M84,389.4L94.2,387.2V406.8H91.2V394.8L84,396.4Z" fill="#129a22"/>
<circle cx="88.8" cy="406.7" r="5.3" fill="#129a22"/>
<!-- crop -->
<rect x="144.5" y="359.6" width="59.4" height="50.8" fill="#f7fafc" stroke="#9fc3de" stroke-width="2"/>
<g fill="#909aa6"><rect x="141.6" y="356.6" width="3.8" height="3.8"/><rect x="172.3" y="356.6" width="3.8" height="3.8"/><rect x="203" y="356.6" width="3.8" height="3.8"/><rect x="141.6" y="383.2" width="3.8" height="3.8"/><rect x="203" y="383.2" width="3.8" height="3.8"/><rect x="141.6" y="409.6" width="3.8" height="3.8"/><rect x="172.3" y="409.6" width="3.8" height="3.8"/><rect x="203" y="409.6" width="3.8" height="3.8"/></g>
<path d="M162,362.4L163.8,362L175.6,384.6L171.6,385.6Z" fill="#ededed"/>
<path d="M184.8,362.4L186,366.6L175.4,385.4L172.6,381.6Z" fill="#a3a3a3"/>
<path fill-rule="evenodd" fill="#e8503a" d="M172,386.2C171,392 168,394.4 163.4,392.4C158.6,390.6 155.6,394.6 156,399.4C156.4,404.4 160,407 164.4,406.6C169.4,406.2 171.6,401.6 172.4,397.2C173,393.6 173.6,390.4 173.6,387.4ZM160.2,400.6C160,397.6 162,395 164.8,395.2C167.8,395.4 167.6,398.4 166.4,400.6C165.2,402.8 160.6,403.8 160.2,400.6Z"/>
<path fill-rule="evenodd" fill="#e8503a" d="M174.600,386.400C176.200,391.600 178.800,393.800 183.400,392.200C188.400,390.600 191.800,394.200 191.600,399.000C191.400,403.800 188.200,406.600 183.800,406.600C178.800,406.600 176.400,402.400 175.600,398.000C174.800,394.000 173.800,390.600 173.400,387.600ZM187.600,399.600C187.600,396.400 185.400,394.600 182.800,395.000C180.000,395.400 180.000,398.400 181.400,400.600C182.800,402.800 187.600,403.000 187.600,399.600Z"/>
<ellipse cx="163.400" cy="398.700" rx="2.2" ry="3.200" transform="rotate(35 163.4 398.7)" fill="#d8d8d8"/>
<circle cx="173.600" cy="384.800" r=".9" fill="#111"/>
<!-- quick clip -->
<use href="#film" x="267" y="360.3" width="34.800" height="36.500" filter="url(#ssh)"/>
<g filter="url(#ssh)">
<path d="M257,385.200L262.600,378.400L268.600,383" fill="none" stroke="#9a58b8" stroke-width="4.600" stroke-linecap="round" stroke-linejoin="miter"/>
<path d="M273,396.800L278.200,402.400L272.400,410" fill="none" stroke="#9a58b8" stroke-width="4.600" stroke-linecap="round" stroke-linejoin="miter"/>
<path d="M253.200,410L273,386.600L280.700,393L287.500,386.600" fill="none" stroke="#f0607a" stroke-width="4.400" stroke-linecap="round" stroke-linejoin="miter"/>
<circle cx="279" cy="378.400" r="5" fill="#fbd3a6"/>
</g>
<path d="M250.400,391.800H256.400M253.400,394.400H259.400" stroke="#a8b4c0" stroke-width="1.100"/>
<path d="M306.800,372.800L309.200,375.600L299.400,395.800L296.400,393.400Z" fill="#9c9c9c" filter="url(#ssh)"/>
<path d="M286.600,372.800L288.800,371.600L300,393.800L296.600,395.800Z" fill="#f2f2f2" filter="url(#ssh)"/>
<g filter="url(#ssh)">
<path fill-rule="evenodd" fill="#e04a38" d="M296.600,392.600C295.800,396.800 293.400,399.600 289.400,398.600C284.600,397.600 281.400,401.400 281.800,405.600C282.200,410 285.400,412.400 289.200,412C293.600,411.600 295.800,408 296.800,403.600C297.600,400 298.200,396.800 298.400,393.800ZM285.400,406C285.200,403.400 287,401.600 289.200,401.800C291.600,402 292.800,404 292,406C291.200,408.200 285.800,409.200 285.400,406Z"/>
<path fill-rule="evenodd" fill="#e04a38" d="M299.200,392.600C300.600,396.800 302.600,399.400 306.600,398.400C311.400,397.400 314.600,400.800 314.400,405C314.200,409.400 311.200,412 307.400,411.800C303,411.600 300.600,408.200 299.600,403.800C298.800,400.200 298,396.800 297.600,393.800ZM310.800,405.400C310.800,402.800 309,401.200 306.800,401.600C304.400,402 303.400,404.200 304.400,406C305.600,408.200 310.800,408.400 310.800,405.400Z"/>
</g>
<!-- watermark -->
<text x="362.600" y="405.400" font-family="DejaVu Sans, Liberation Sans, sans-serif" font-size="14.600" fill="#111" textLength="36.500" lengthAdjust="spacingAndGlyphs">Logo</text>
<g filter="url(#ssh)">
<path d="M402.600,357.600Q409,356.800 414.600,358.400Q416.200,359 416.600,360.600L417,364L393.600,402.800L390.400,400.600L377.200,394.400Q376.600,391.400 378.200,389.400Z" fill="#c24a1c"/>
<path d="M416.400,360.400L417,364L393.600,402.800L391,400.400Z" fill="#b84a20"/>
<path d="M416.400,360.400L417,364L410.800,374.400L408.200,371.600Z" fill="#3a6292"/>
</g>
<path d="M395.500,367.500L408.400,371.500L391,400L377.200,393.800Q376.800,391.200 378.200,389.400Z" fill="url(#geraser)"/>
<path d="M402.600,357.600Q409,356.600 414.600,358.200Q416,358.800 415.800,359.400L408.400,371.500L395.500,367.500Z" fill="url(#geraserb)"/>
<path d="M415.900,359.600L391,400.200L377.400,394" fill="none" stroke="#ffd8b0" stroke-width=".9"/>
<path d="M415.900,359.600L408.600,371.600" fill="none" stroke="#f4f8ff" stroke-width=".9"/>

<!-- export frames -->
<use href="#film" x="34.8" y="472.3" width="25.2" height="27.5"/>
<use href="#brace" x="60" y="474.4" width="12.6" height="21.4"/>
<g filter="url(#ssh)"><rect x="72.4" y="457.3" width="24.6" height="15.6" fill="#333"/><rect x="72.4" y="477.4" width="24.6" height="15.4" fill="#111"/><rect x="72.4" y="498" width="24.6" height="15.6" fill="#223"/></g>
<rect x="72.9" y="457.8" width="23.6" height="14.6" fill="url(#gthumb1)"/>
<path d="M81.500,466.500C84,463 88,460.500 91,461L92.500,460L93,462.500C95,463.500 96,466 95.500,468.500L84,469Z" fill="#f2ece6" opacity=".85"/>
<path d="M82.500,468.600L95.500,467.600L94.500,470.800H84.500Z" fill="#6a4030" opacity=".9"/>
<rect x="72.900" y="470.600" width="23.600" height="1.800" fill="#8a6860" opacity=".7"/>
<rect x="72.900" y="477.900" width="23.600" height="14.400" fill="url(#gthumb2)"/>
<ellipse cx="88.700" cy="489.400" rx="5" ry="3.400" fill="url(#gdome)"/>
<rect x="82" y="490.600" width="14" height="1.700" fill="#0a0c18"/>
<rect x="72.900" y="498.500" width="23.600" height="14.600" fill="url(#gthumb3)"/>
<path d="M73,501.500C76,499.500 79,502 82,500.500C85,499 88,501.500 91,500C93,499.200 95,500.500 96.500,500V503C93,504 90,502.500 87,504C84,505.500 80,503 77,504.500C75.500,505 74,504.500 73,504Z" fill="#e6eef8" opacity=".9"/>
<path d="M74,508.500C78,507 82,508.500 86,507.500C90,506.500 93,508 96,507.500V509.500C92,510.500 90,509.500 87,511L85,512.500L82,510.500C79,510 76,510.500 74,510Z" fill="#dfe8f4" opacity=".85"/>
<!-- screen record -->
<g filter="url(#psh)"><rect x="147.800" y="465.500" width="49.800" height="39" rx="3" fill="#fff"/></g>
<rect x="150" y="467.300" width="45.400" height="35.400" rx="1" fill="url(#gscr)"/>
<path d="M150,490L172,468H186L150,502.500Z" fill="#4ab0f4" opacity=".25"/>
<path d="M154.600,476V471H161M185.600,471H192V476M192,494.800V499.800H185.600M161,499.800H154.600V494.800" fill="none" stroke="#b83a78" stroke-width=".9" opacity=".8"/>
<path d="M162,481C162,478 164,476.500 167,476L174,474C176,473 179,473.500 180.500,475.500L181.500,479L181,484L172,486V496.500L165,495C162.500,494 161.500,492 161.500,489Z" fill="url(#gcam)" stroke="#7a7a82" stroke-width=".4"/>
<path d="M172,478.600C174.500,476.500 178.500,476.500 180,479L180.500,483.500L172.600,485.200Z" fill="#f6f6f6"/>
<ellipse cx="164.300" cy="482.200" rx="3" ry="3.800" fill="#1c2c54"/><ellipse cx="164.800" cy="481.800" rx="1.500" ry="2.200" fill="#6a9ae0"/>
<path d="M176,474L180,473.200L181.200,478L178.400,476.200Z" fill="#44464c"/>
<rect x="171.800" y="484.400" width="13.800" height="11.200" fill="#d4d4d8" stroke="#8a8a90" stroke-width=".5"/>
<rect x="173.400" y="486.200" width="10.600" height="7.600" fill="#4a8ae0"/>
<text x="178.700" y="492.300" text-anchor="middle" font-family="Liberation Sans, sans-serif" font-weight="bold" font-size="4.600" fill="#e02020">REC</text>
<path d="M164.400,487.600L166.400,487.600L165.400,490Z" fill="#d03030"/>
<!-- player -->
<g filter="url(#ssh)"><path fill-rule="evenodd" fill="#2b9af3" d="M256,460H308.200V508.400H256ZM263.500,470.600V497.700H300.400V470.600Z"/></g>
<rect x="263.500" y="470.600" width="36.900" height="27.100" fill="#fdfeff"/>
<g fill="#8fc9f6"><rect x="259.800" y="463.800" width="3" height="3"/><rect x="270.200" y="463.800" width="3" height="3"/><rect x="280.700" y="463.800" width="3" height="3"/><rect x="290.900" y="463.800" width="3" height="3"/><rect x="301.100" y="463.800" width="3" height="3"/>
<rect x="259.800" y="501.500" width="3" height="3"/><rect x="270.200" y="501.500" width="3" height="3"/><rect x="280.700" y="501.500" width="3" height="3"/></g>
<path d="M276.800,477.500V490.400L289.800,484Z" fill="#2b9af3"/>
<g filter="url(#ssh)"><path d="M283,500C282,495 284,491.500 288,490.500L291.500,489.800V488.800H298V491L304,492.500C307,494 308,497 307.400,501L306.600,507.400C306.400,508.600 305.600,509.300 304.400,509.300H286C284,509.300 283.400,505 283,500Z" fill="url(#gsilver)"/></g>
<path d="M286.400,492.500L292.500,493.800L293,504L286,506Z" fill="url(#gbluefilm)"/>
<circle cx="297.600" cy="499" r="5.600" fill="url(#gdisc)" stroke="#aaa" stroke-width=".4"/>
<path d="M299,502V494.600L303,494V500.500M296,498.600H300.500" stroke="#444a55" stroke-width=".9" fill="none"/>
<path d="M297,489.800L299.500,488L301,490.500Z" fill="#222"/>
<!-- video download -->
<use href="#wfilmw" x="368" y="474" width="25" height="20.800"/>
<circle cx="395.500" cy="482.600" r="4.800" fill="#58c032" stroke="#e8f6e0" stroke-width=".5"/>
<path d="M394.700,479.600H396.300V482.600H398L395.500,485.800L393,482.600H394.700Z" fill="#fff"/>
<ellipse cx="405.500" cy="495.200" rx="6.500" ry="1.200" fill="#999" opacity=".35"/>
<circle cx="405" cy="487.800" r="7" fill="#1a68b8"/>
<path d="M403,481.400C406,480.400 409.500,481.600 411,484.500C412,487 411.500,490 410,492C408.500,493.500 406,493.200 405.200,491.500C404.600,489.800 406,488.200 405.200,486.600C404.600,485.200 402.600,485.600 402,484.200C401.600,483 402,482 403,481.400Z" fill="#a4c82c"/>
<path d="M399.200,486.500C400.500,485.500 402.400,486.200 402.600,488C402.800,490 401.600,491.500 402.400,493.400C400.200,492.400 398.800,490.400 398.600,488.200Z" fill="#f4f8fc"/>
<path d="M405.600,484.600L408.200,486.400L406.800,489Z" fill="#f0f4e0"/>

<!-- audio -->
<path d="M9.300,597.400H35V619L27.400,626H9.300Z" fill="#f1f1f1" stroke="#c6c6c6" stroke-width=".7"/>
<path d="M27.400,626C28.400,623.400 28.200,621.200 27.600,619.400C30,620 32.600,620 35,619Z" fill="#fbfbfb" stroke="#c6c6c6" stroke-width=".6"/>
<path d="M14.200,605.400C12.600,608 12.600,612 14.200,614.600M12,603.800C9.800,607.400 9.800,612.600 12,616.200M29.800,605.400C31.400,608 31.400,612 29.800,614.600M32,603.800C34.200,607.400 34.200,612.600 32,616.200" stroke="#c4c4c4" stroke-width=".8" fill="none"/>
<ellipse cx="18.800" cy="617.300" rx="4.100" ry="2.800" transform="rotate(-18 18.8 617.3)" fill="url(#gnote)"/>
<path d="M21.700,617V601.200C22.600,604 25.800,606 26.600,609.400C27,611 26.600,612.400 26,613.400C26,610.400 24.400,608.200 22.900,607.400V617Z" fill="#12901a"/>
<!-- image -->
<g filter="url(#ssh)"><path d="M7.800,637H36V662.400L33.200,665.200H7.800Z" fill="#ccc"/></g>
<path d="M7.800,637H36V662.400L33.200,665.200H7.800Z" fill="url(#gsky)"/>
<path d="M7.800,652.600C11,651.200 13,652.400 16,651.400C19,650.200 22,650.600 25,650.200C28,649.800 32,650.600 36,649.800V654.600C30,655.800 24,655 18,656C14,656.600 10,656 7.800,656.400Z" fill="#e4c48a" opacity=".9"/>
<path d="M25,657.400C27,654.800 32,654.200 35.600,655.400V660C32,661.600 27,661.400 25,657.400Z" fill="#2a2c34" opacity=".6" filter="url(#b2)"/>
<path d="M33.200,665.200L33.600,662.600L36,662.400Z" fill="#fff" stroke="#bbb" stroke-width=".4"/>
<!-- doc -->
<path d="M6.400,675H25L30.800,680.800V705.400H6.400Z" fill="#ececec"/>
<path d="M6.400,704.600H30.800V705.600H6.400Z" fill="#d6d6d6"/>
<path d="M25,675L30.800,680.800H25Z" fill="#2c98d2"/>
<path d="M10.200,682H22M10.200,686.800H26.800M10.200,691.600H26.200M10.200,696.400H24M10.200,701.200H22" stroke="#8d99a8" stroke-width="1.100"/>
<path d="M32.200,685.400L36.800,688.600L30.400,698L25.800,694.800Z" fill="#f2a21a"/>
<path d="M32.200,685.400L36.800,688.600L38,686.800Q38.400,685.800 37.400,685L34.800,683.200Q33.800,682.600 33.200,683.600Z" fill="#e0404e"/>
<path d="M25.800,694.800L30.400,698L25.200,701.400Z" fill="#fbf0d8"/>
<path d="M25.400,698.600L27.600,699.800L25.200,701.400Z" fill="#1a1a1a"/>
<!-- drive -->
<rect x="7.400" y="714.200" width="29.200" height="29" rx="3.200" fill="url(#gdrv)"/>
<path d="M7.400,738.600H36.600V740.400Q36.600,743.200 33.800,743.200H10.200Q7.400,743.200 7.400,740.400Z" fill="#b8b8b8"/>
<path d="M9.400,741H34.600" stroke="#8e8e8e" stroke-width="1"/>
<rect x="10.200" y="715.800" width="6.600" height="2.600" rx=".6" fill="#0a0a0a"/>
<circle cx="22.100" cy="727" r="10.400" fill="url(#gcd)"/>
<g filter="url(#b1)"><path d="M22.100,727L14,720.600A10.400,10.400 0 0 1 20,716.800Z" fill="#e4bcd8" opacity=".8"/>
<path d="M22.100,727L30.400,720.800A10.400,10.400 0 0 0 24,716.800Z" fill="#b0e4c4" opacity=".9"/>
<path d="M22.100,727L13.600,733A10.400,10.400 0 0 0 19.400,737Z" fill="#b4e6c6" opacity=".9"/>
<path d="M22.100,727L30.600,733.200A10.400,10.400 0 0 1 25,737Z" fill="#e6c4dc" opacity=".8"/>
</g>
<path d="M17,734.600A9,9 0 0 0 27,735" stroke="#fff" stroke-width="2.200" fill="none" opacity=".7"/>
<circle cx="22.100" cy="727" r="3.200" fill="#fbfbfb"/><circle cx="22.100" cy="727" r="1.300" fill="#cfcfd4"/>
<!-- reel -->
<path d="M34.600,765.400C36.200,769 35.600,774 32,777C27,781 19,781 11.600,777.600" stroke="#1c1c1c" stroke-width="2.400" fill="none" stroke-linecap="butt"/>
<path d="M33,767C34.200,770 33.600,773.600 31,775.600C26.600,779 19.600,778.800 13,776" stroke="#6a6a6a" stroke-width=".8" fill="none"/>
<ellipse cx="22" cy="776.200" rx="9" ry="1.400" fill="#000" opacity=".15"/>
<circle cx="21.300" cy="764" r="11.600" fill="url(#greel)" stroke="#8c8c8c" stroke-width=".6"/>
<ellipse cx="22.29" cy="756.97" rx="3" ry="2.100" transform="rotate(8 22.29 756.97)" fill="#0c0c0c"/><ellipse cx="27.88" cy="761.34" rx="3" ry="2.100" transform="rotate(68 27.88 761.34)" fill="#0c0c0c"/><ellipse cx="26.89" cy="768.37" rx="3" ry="2.100" transform="rotate(128 26.89 768.37)" fill="#0c0c0c"/><ellipse cx="20.31" cy="771.03" rx="3" ry="2.100" transform="rotate(188 20.31 771.03)" fill="#0c0c0c"/><ellipse cx="14.72" cy="766.66" rx="3" ry="2.100" transform="rotate(248 14.72 766.66)" fill="#0c0c0c"/><ellipse cx="15.71" cy="759.63" rx="3" ry="2.100" transform="rotate(308 15.71 759.63)" fill="#0c0c0c"/>
<circle cx="21.300" cy="764" r="2.700" fill="#b8b8b8" stroke="#8a8a8a" stroke-width=".5"/>

<!-- status folder -->
<path d="M10.200,794.600Q10.200,793.400 11.400,793.400H15.600L17,794.800H23.800Q25,794.800 25,796V805Q25,806 23.800,806H11.400Q10.200,806 10.200,805Z" fill="#e9d88e"/>
<path d="M10.200,796.600H25V805Q25,806 23.800,806H11.400Q10.200,806 10.200,805Z" fill="#efe09c"/>
<path d="M10.400,805.600H24.800" stroke="#cdb868" stroke-width=".8"/>
<ellipse cx="17.800" cy="800.800" rx="3" ry="2.500" fill="#f6f6f8"/>
<path d="M16.200,799.800L17.400,799.200L17.800,801.400L16.600,802Z" fill="#1a2040"/>
<circle cx="19.200" cy="799.800" r=".7" fill="#444"/>
<!-- check -->
<path d="M94.200,800.600L96.600,803.400L101.200,797.400" stroke="#333" stroke-width="1.300" fill="none"/>
<!-- grip -->
<g fill="#e4e4e4"><rect x="1161.600" y="798.600" width="1.700" height="1.700"/><rect x="1158.600" y="801.600" width="1.700" height="1.700"/><rect x="1161.600" y="801.600" width="1.700" height="1.700"/><rect x="1155.600" y="804.600" width="1.700" height="1.700"/><rect x="1158.600" y="804.600" width="1.700" height="1.700"/><rect x="1161.600" y="804.600" width="1.700" height="1.700"/></g>

<!-- hand-drawn red outline -->
<path d="M16.400,141.300C16.500,170 16.200,205 16.500,232C16.500,237.600 16.900,239.200 19.200,239.500C36,240.400 54,240.300 69.300,239.800C85,239.400 101,237.600 114.500,235.200C118.500,234.200 120.500,228 121.600,220.400C123.400,206 124.200,190 123.700,176.600C123.200,165 121.400,155 118.800,148.400C117.400,144 116,140.400 113.800,138.500C112,136.600 110,135.800 107.500,135.600C91,134 73,133.800 56.600,134.200C44,134.600 31,142.400 19.900,148.400" fill="none" stroke="#cf1b22" stroke-width="3" stroke-linecap="round" stroke-linejoin="round"/>

</svg>
<!--BORDERS-->
<div id="bright"></div><div id="bbot"></div><div id="btop"></div>
</div>
</body>
</html>
